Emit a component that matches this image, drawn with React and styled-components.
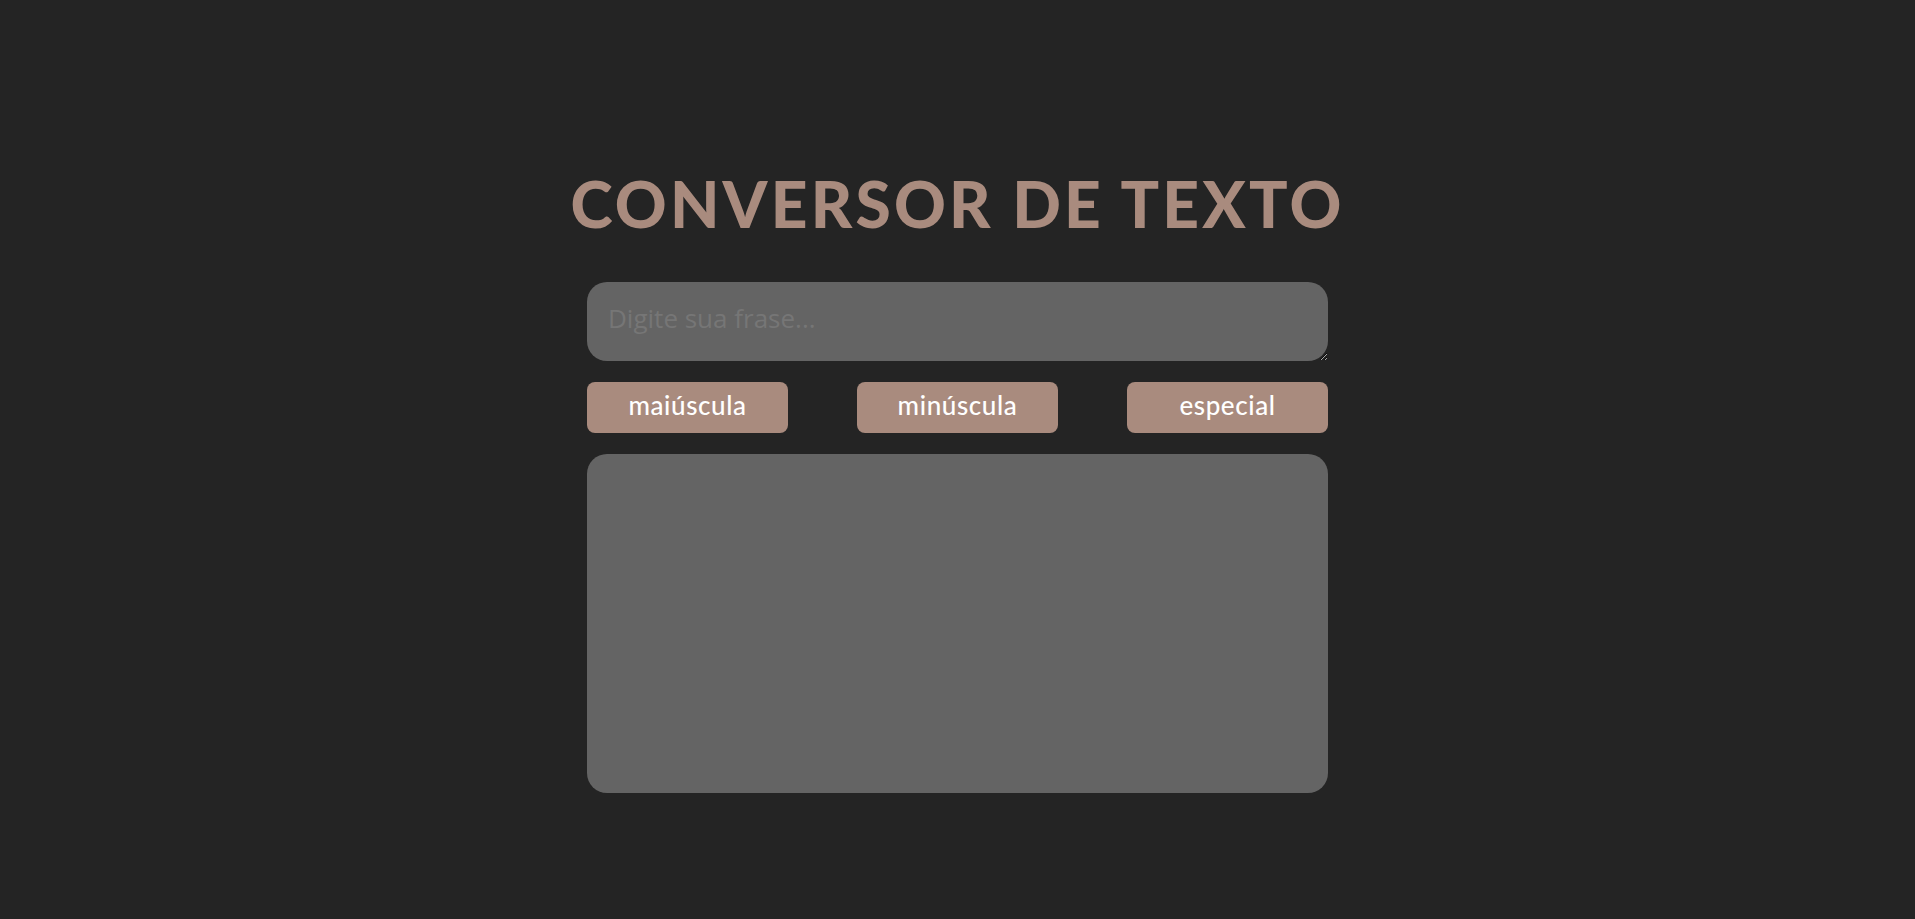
import React, { useState } from "react";
import styled, { createGlobalStyle } from "styled-components";

const GlobalStyle = createGlobalStyle`
  * {
    box-sizing: border-box;
  }
  body {
    margin: 0;
    background: #242424;
    font-family: "Lato", "Open Sans", sans-serif;
  }
`;

const Page = styled.main`
  min-height: 100vh;
  display: flex;
  flex-direction: column;
  align-items: center;
  padding-top: 172px;
`;

const Title = styled.h1`
  margin: 0 0 46px;
  font-family: "Lato", sans-serif;
  font-weight: 900;
  font-size: 64px;
  line-height: 1;
  letter-spacing: 3.2px;
  color: #a98b7e;
  text-transform: uppercase;
`;

const Panel = styled.section`
  width: 741px;
  display: flex;
  flex-direction: column;
  gap: 21px;
`;

const Input = styled.textarea`
  width: 100%;
  height: 79px;
  border: none;
  outline: none;
  border-radius: 20px;
  background: #646464;
  padding: 18px 21px;
  font-family: "Open Sans", sans-serif;
  font-weight: 400;
  font-size: 26px;
  color: #eee;
  resize: vertical;

  &::placeholder {
    color: #767676;
  }
`;

const ButtonRow = styled.div`
  display: flex;
  justify-content: space-between;
`;

const Button = styled.button`
  width: 201px;
  height: 51px;
  border: none;
  border-radius: 8px;
  background: #a98b7e;
  color: #fff;
  padding: 0 0 5px;
  font-family: "Lato", sans-serif;
  font-size: 26px;
  font-weight: 500;
  letter-spacing: 0.6px;
  cursor: pointer;
`;

const Output = styled.div`
  width: 100%;
  height: 339px;
  border-radius: 20px;
  background: #646464;
  padding: 19px 21px;
  font-family: "Open Sans", sans-serif;
  font-size: 24px;
  color: #eee;
  white-space: pre-wrap;
  word-break: break-word;
`;

const especial = (text) =>
  text
    .split("")
    .map((ch, i) => (i % 2 === 0 ? ch.toUpperCase() : ch.toLowerCase()))
    .join("");

const App = () => {
  const [text, setText] = useState("");
  const [result, setResult] = useState("");

  return (
    <>
      <GlobalStyle />
      <Page>
        <Title>Conversor de texto</Title>
        <Panel>
          <Input
            placeholder="Digite sua frase..."
            value={text}
            onChange={(e) => setText(e.target.value)}
          />
          <ButtonRow>
            <Button onClick={() => setResult(text.toUpperCase())}>maiúscula</Button>
            <Button onClick={() => setResult(text.toLowerCase())}>minúscula</Button>
            <Button onClick={() => setResult(especial(text))}>especial</Button>
          </ButtonRow>
          <Output>{result}</Output>
        </Panel>
      </Page>
    </>
  );
};

export default App;
